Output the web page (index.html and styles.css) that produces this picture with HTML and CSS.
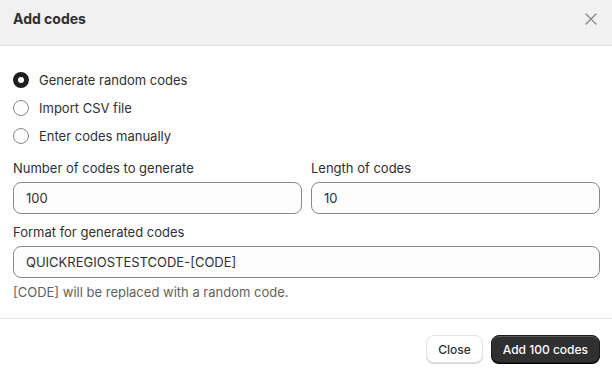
FILE: index.html
```html
<!DOCTYPE html>
<html>
<head>
<meta charset="utf-8">
<link rel="stylesheet" href="styles.css">
</head>
<body>
<div class="modal">
  <div class="header">
    <h2 class="title">Add codes</h2>
    <button class="close-x" aria-label="Close">
      <svg width="14" height="14" viewBox="0 0 14 14"><path d="M2 2L12 12M12 2L2 12" stroke="#8a8a8a" stroke-width="1.4" stroke-linecap="round" fill="none"/></svg>
    </button>
  </div>
  <div class="body">
    <div class="radios">
      <label class="radio"><span class="dot checked"></span>Generate random codes</label>
      <label class="radio"><span class="dot"></span>Import CSV file</label>
      <label class="radio"><span class="dot"></span>Enter codes manually</label>
    </div>
    <div class="row">
      <div class="field">
        <div class="label">Number of codes to generate</div>
        <div class="input">100</div>
      </div>
      <div class="field">
        <div class="label">Length of codes</div>
        <div class="input">10</div>
      </div>
    </div>
    <div class="field">
      <div class="label">Format for generated codes</div>
      <div class="input">QUICKREGIOSTESTCODE-[CODE]</div>
      <div class="help">[CODE] will be replaced with a random code.</div>
    </div>
  </div>
  <div class="footer">
    <button class="btn secondary">Close</button>
    <button class="btn primary">Add 100 codes</button>
  </div>
</div>
</body>
</html>
```
FILE: styles.css
```css
* { box-sizing: border-box; }
html, body { margin: 0; padding: 0; background: #fff; }
body {
  font-family: Inter, "Noto Sans", sans-serif;
  font-size: 13px;
  color: #303030;
  width: 612px;
  height: 372px;
  overflow: hidden;
}
.modal { display: flex; flex-direction: column; }
.header {
  height: 46px;
  background: #f1f1f1;
  border-bottom: 1px solid #e3e3e3;
  display: flex;
  align-items: center;
  justify-content: space-between;
  padding: 0 14px 0 13px;
}
.title { margin: 0; font-size: 14px; font-weight: 650; color: #303030; position: relative; top: -4px; }
.close-x {
  border: 0; background: transparent; padding: 0; width: 14px; height: 14px;
  display: flex; position: relative; top: -4px;
}
.body { padding: 20px 12px 16px 12px; display: flex; flex-direction: column; gap: 8px; }
.radios { display: flex; flex-direction: column; }
.radio {
  height: 28px; display: flex; align-items: center; gap: 10px; padding-left: 1px;
  color: #303030;
}
.dot {
  width: 16px; height: 16px; border-radius: 50%;
  border: 1px solid #8a8a8a; background: #fdfdfd; flex: none;
}
.dot.checked { border: 5px solid #1f1f1f; background: #fff; }
.row { display: grid; grid-template-columns: 1fr 1fr; gap: 8px; }
.field { display: flex; flex-direction: column; gap: 4px; }
.label { line-height: 20px; color: #303030; padding-left: 1px; }
.input {
  height: 32px; border: 1px solid #8a8a8a; border-radius: 8px;
  background: #fdfdfd; display: flex; align-items: center; padding: 0 12px;
  margin-left: 1px;
}
.help { line-height: 20px; color: #616161; padding-left: 1px; }
.footer {
  border-top: 1px solid #e3e3e3;
  padding: 16px 12px 16px 12px;
  display: flex; justify-content: flex-end; gap: 8px;
}
.btn {
  font-family: Inter, "Noto Sans", sans-serif;
  font-size: 12px; font-weight: 550; height: 28px; border-radius: 8px;
  padding: 0 11px; cursor: pointer; margin-top: 0;
}
.secondary {
  background: #fff; color: #303030; border: 1px solid #e3e3e3;
  box-shadow: 0 1px 0 #d4d4d4;
}
.primary {
  background: #303030; color: #fff; border: 1px solid #1a1a1a;
  box-shadow: inset 0 1px 0 rgba(255,255,255,0.2), 0 1px 0 #000;
}
```
